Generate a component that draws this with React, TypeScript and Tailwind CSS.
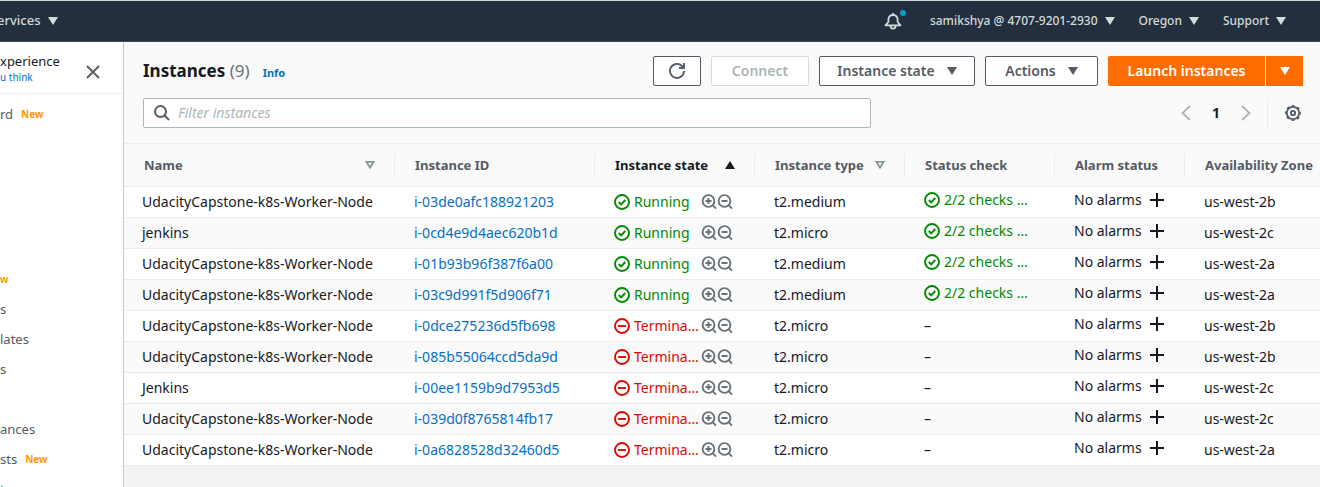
import type { ReactNode } from "react";

const instances = [
  { name: "UdacityCapstone-k8s-Worker-Node", id: "i-03de0afc188921203", running: true, type: "t2.medium", zone: "us-west-2b" },
  { name: "jenkins", id: "i-0cd4e9d4aec620b1d", running: true, type: "t2.micro", zone: "us-west-2c" },
  { name: "UdacityCapstone-k8s-Worker-Node", id: "i-01b93b96f387f6a00", running: true, type: "t2.medium", zone: "us-west-2a" },
  { name: "UdacityCapstone-k8s-Worker-Node", id: "i-03c9d991f5d906f71", running: true, type: "t2.medium", zone: "us-west-2a" },
  { name: "UdacityCapstone-k8s-Worker-Node", id: "i-0dce275236d5fb698", running: false, type: "t2.micro", zone: "us-west-2b" },
  { name: "UdacityCapstone-k8s-Worker-Node", id: "i-085b55064ccd5da9d", running: false, type: "t2.micro", zone: "us-west-2b" },
  { name: "Jenkins", id: "i-00ee1159b9d7953d5", running: false, type: "t2.micro", zone: "us-west-2c" },
  { name: "UdacityCapstone-k8s-Worker-Node", id: "i-039d0f8765814fb17", running: false, type: "t2.micro", zone: "us-west-2c" },
  { name: "UdacityCapstone-k8s-Worker-Node", id: "i-0a6828528d32460d5", running: false, type: "t2.micro", zone: "us-west-2a" },
];

function Caret({ className = "" }: { className?: string }) {
  return (
    <svg viewBox="0 0 10 8" className={`h-2 w-[10px] shrink-0 ${className}`} fill="currentColor" aria-hidden="true">
      <path d="M0 0h10L5 8z" />
    </svg>
  );
}

function SortCaret() {
  return (
    <svg viewBox="0 0 10 8" className="h-2 w-[10px] shrink-0 text-[#879596]" fill="none" stroke="currentColor" strokeWidth="1.8" aria-hidden="true">
      <path d="M1.4 0.9h7.200L5 6.600z" />
    </svg>
  );
}

function StatusIcon({ ok }: { ok: boolean }) {
  return (
    <svg viewBox="0 0 16 16" className="size-4 shrink-0" fill="none" stroke="currentColor" strokeWidth="1.9" aria-hidden="true">
      <circle cx="8" cy="8" r="7" />
      {ok ? <path d="M4.8 8l2.3 2.3L11.3 6" /> : <path d="M4 8h8" />}
    </svg>
  );
}

function Magnifier({ plus }: { plus: boolean }) {
  return (
    <svg viewBox="0 0 16 16" className="size-4 shrink-0" fill="none" stroke="currentColor" strokeWidth="1.9" aria-hidden="true">
      <circle cx="7.5" cy="7" r="5.900" />
      <path d="M11.600 11.200l3.400 3.400M4.500 7h6" />
      {plus && <path d="M7.5 4v6" />}
    </svg>
  );
}

function NavMenu({ children }: { children: ReactNode }) {
  return (
    <button type="button" className="flex items-center gap-[7px]">
      {children}
      <Caret className="w-[9px]" />
    </button>
  );
}

function NewTag() {
  return <span className="text-[10px] font-bold text-[#ff9900]">New</span>;
}

function SideLink({ label, isNew }: { label: string; isNew?: boolean }) {
  return (
    <a href="#" className="flex h-[30px] items-center gap-2 text-[13px] text-[#545b64]">
      {label}
      {isNew && <NewTag />}
    </a>
  );
}

function Th({ children, icon, active, last }: { children: ReactNode; icon?: ReactNode; active?: boolean; last?: boolean }) {
  return (
    <th className="p-0 text-left text-[13px] font-bold">
      <div className={`flex h-[22px] items-center justify-between pr-[19px] pl-5 ${last ? "" : "border-r border-[#eaeded]"} ${active ? "text-[#16191f]" : "text-[#545b64]"}`}>
        {children}
        {icon}
      </div>
    </th>
  );
}

export default function App() {
  return (
    <div className="flex h-screen flex-col overflow-hidden bg-[#f2f3f3] font-['Noto_Sans',sans-serif] text-sm text-[#16191f]">
      <header className="flex h-[42px] shrink-0 items-center justify-between border-t border-b border-t-[#d5dbdb] border-b-[#414750] bg-[#232f3e] pr-[34px] text-xs font-medium text-[#d5dbdb]">
        <button type="button" className="-ml-[3px] flex items-center gap-[7px] text-[13px]">
          ervices
          <Caret />
        </button>
        <div className="flex items-center gap-6">
          <button type="button" aria-label="Notifications" className="relative mr-1">
            <svg viewBox="0 0 18 18" className="size-[18px]" fill="none" stroke="currentColor" strokeWidth="1.8" strokeLinejoin="round" aria-hidden="true">
              <path d="M9 1v2M1.500 13.300h15L13.600 10V7.500C13.600 4.800 11.600 3 9 3S4.400 4.800 4.400 7.500V10zM6.400 13.800c0 3.700 5.200 3.700 5.200 0" />
            </svg>
            <span className="absolute -top-[2px] -right-[4px] size-[6px] rounded-full bg-[#00a1c9]" />
          </button>
          <NavMenu>samikshya @ 4707-9201-2930</NavMenu>
          <NavMenu>Oregon</NavMenu>
          <NavMenu>Support</NavMenu>
        </div>
      </header>

      <div className="flex min-h-0 flex-1">
        <aside className="w-[124px] shrink-0 overflow-hidden border-r border-[#c3cbcb] bg-white">
          <div className="flex h-[52px] items-center justify-between border-b border-[#eaeded] pr-[23px]">
            <div>
              <p className="text-[13px] leading-[18px]">xperience</p>
              <a href="#" className="block text-[10px] leading-[14px] text-[#066fc5]">u think</a>
            </div>
            <button type="button" aria-label="Close" className="mt-2 text-[#545b64]">
              <svg viewBox="0 0 14 14" className="size-[14px]" fill="none" stroke="currentColor" strokeWidth="1.8" aria-hidden="true">
                <path d="M1 1l12 12M13 1L1 13" />
              </svg>
            </button>
          </div>
          <nav className="pt-[5px]">
            <SideLink label="rd" isNew />
            <div className="mt-[135px] flex h-[30px] items-center">
              <span className="text-[10px] font-bold text-[#ff9900]">w</span>
            </div>
            <SideLink label="s" />
            <SideLink label="lates" />
            <SideLink label="s" />
            <div className="mt-[30px]">
              <SideLink label="ances" />
              <SideLink label="sts" isNew />
              <SideLink label="t" />
            </div>
          </nav>
        </aside>

        <main className="min-w-0 flex-1">
          <div className="bg-[#fafafa] pt-[14px] pr-[17px] pb-[15px] pl-[19px]">
            <div className="flex h-[30px] items-center justify-between">
              <div className="flex items-baseline gap-[13px]">
                <h1 className="text-[17px] font-bold">
                  Instances <span className="font-normal text-[#687078]">(9)</span>
                </h1>
                <a href="#" className="text-[11px] font-bold text-[#066fc5]">Info</a>
              </div>
              <div className="flex h-[30px] gap-[10px] font-semibold text-[#545b64]">
                <button type="button" aria-label="Refresh" className="flex w-12 items-center justify-center rounded-xs border border-[#545b64] bg-white">
                  <svg viewBox="0 0 16 16" className="size-4" fill="none" stroke="currentColor" strokeWidth="1.9" aria-hidden="true">
                    <path d="M15 8a7 7 0 1 1-2-5l1 1.200M15 0v5h-5" />
                  </svg>
                </button>
                <button type="button" disabled className="w-[98px] rounded-xs border border-[#d5dbdb] bg-white text-[#aab7b8]">Connect</button>
                <button type="button" className="flex w-[156px] items-center justify-center gap-3 rounded-xs border border-[#545b64] bg-white">
                  Instance state
                  <Caret />
                </button>
                <button type="button" className="flex w-[113px] items-center justify-center gap-3 rounded-xs border border-[#545b64] bg-white">
                  Actions
                  <Caret />
                </button>
                <div className="flex gap-px text-white">
                  <button type="button" className="w-[157px] rounded-l-xs bg-[#ff6c00]">Launch instances</button>
                  <button type="button" aria-label="More launch options" className="flex w-[37px] items-center justify-center bg-[#ff6c00]">
                    <Caret />
                  </button>
                </div>
              </div>
            </div>
            <div className="mt-3 flex h-[30px] items-center justify-between">
              <label className="flex h-full w-[728px] items-center gap-2 rounded-xs border border-[#aab7b8] bg-white px-[10px]">
                <svg viewBox="0 0 16 16" className="size-4 shrink-0 text-[#545b64]" fill="none" stroke="currentColor" strokeWidth="2" aria-hidden="true">
                  <circle cx="6.500" cy="6.500" r="5.500" />
                  <path d="M10.500 10.500L15 15" />
                </svg>
                <input type="text" aria-label="Filter instances" placeholder="Filter instances" className="min-w-0 flex-1 outline-none placeholder:text-[#aab7b8] placeholder:italic" />
              </label>
              <div className="flex h-full items-center pr-[2px]">
                <button type="button" aria-label="Previous page" className="text-[#aab7b8]">
                  <svg viewBox="0 0 10 16" className="h-4 w-[10px]" fill="none" stroke="currentColor" strokeWidth="1.800"><path d="M9 1L1.500 8L9 15" /></svg>
                </button>
                <button type="button" className="w-[50px] font-bold">1</button>
                <button type="button" aria-label="Next page" className="text-[#aab7b8]">
                  <svg viewBox="0 0 10 16" className="h-4 w-[10px]" fill="none" stroke="currentColor" strokeWidth="1.800"><path d="M1 1L8.500 8L1 15" /></svg>
                </button>
                <span className="mr-[17px] ml-4 h-full w-px bg-[#eaeded]" />
                <button type="button" aria-label="Preferences" className="text-[#545b64]">
                  <svg viewBox="0 0 16 16" className="size-4" fill="none" stroke="currentColor" aria-hidden="true">
                    <circle cx="8" cy="8" r="6.200" strokeWidth="1.800" />
                    <circle cx="8" cy="8" r="7.200" strokeWidth="1.500" strokeDasharray="2.827 2.827" strokeDashoffset="1.414" />
                    <circle cx="8" cy="8" r="2.200" strokeWidth="1.800" />
                  </svg>
                </button>
              </div>
            </div>
          </div>

          <table className="w-full table-fixed border-collapse whitespace-nowrap">
            <colgroup>
              <col className="w-[271px]" />
              <col className="w-[200px]" />
              <col className="w-[160px]" />
              <col className="w-[150px]" />
              <col className="w-[150px]" />
              <col className="w-[130px]" />
              <col />
            </colgroup>
            <thead>
              <tr className="h-[43px] border-y border-[#eaeded] bg-[#fafafa]">
                <Th icon={<SortCaret />}>Name</Th>
                <Th>Instance ID</Th>
                <Th active icon={<Caret className="rotate-180" />}>Instance state</Th>
                <Th icon={<SortCaret />}>Instance type</Th>
                <Th>Status check</Th>
                <Th>Alarm status</Th>
                <Th last>Availability Zone</Th>
              </tr>
            </thead>
            <tbody>
              {instances.map((item) => (
                <tr key={item.id} className="h-[31px] border-b border-[#eaeded] bg-white even:bg-[#fafafa]">
                  <td className="py-0 pl-[18px]">{item.name}</td>
                  <td className="py-0 pl-[19px]">
                    <a href="#" className="text-[#066fc5]">{item.id}</a>
                  </td>
                  <td className="py-0 pl-[19px]">
                    <div className="flex items-center">
                      <span className={`flex w-[87px] items-center gap-1 ${item.running ? "text-[#008a00]" : "text-[#e00700]"}`}>
                        <StatusIcon ok={item.running} />
                        {item.running ? "Running" : "Termina…"}
                      </span>
                      <button type="button" aria-label="Filter for this state" className="text-[#687078]"><Magnifier plus /></button>
                      <button type="button" aria-label="Exclude this state" className="text-[#687078]"><Magnifier plus={false} /></button>
                    </div>
                  </td>
                  <td className="py-0 pl-[19px]">{item.type}</td>
                  <td className="py-0 pl-[19px]">
                    {item.running ? (
                      <div className="flex items-center gap-1 pb-1 text-[#008a00]">
                        <StatusIcon ok />
                        2/2 checks …
                      </div>
                    ) : (
                      "–"
                    )}
                  </td>
                  <td className="py-0 pl-[19px]">
                    <div className="flex items-center gap-2 pb-1">
                      No alarms
                      <button type="button" aria-label="Add alarm">
                        <svg viewBox="0 0 14 14" className="size-[14px]" fill="none" stroke="currentColor" strokeWidth="2"><path d="M7 0v14M0 7h14" /></svg>
                      </button>
                    </div>
                  </td>
                  <td className="py-0 pl-[19px]">{item.zone}</td>
                </tr>
              ))}
            </tbody>
          </table>
        </main>
      </div>
    </div>
  );
}
